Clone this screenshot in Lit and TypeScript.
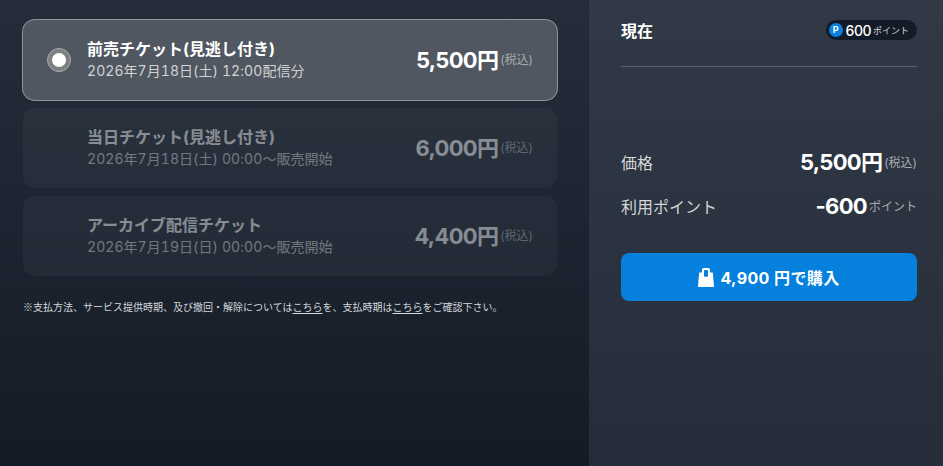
import { LitElement, html, css } from "lit";
import { customElement } from "lit/decorators.js";

const tickets = [
  { name: "前売チケット(見逃し付き)", date: "2026年7月18日(土) 12:00配信分", price: "5,500", active: true },
  { name: "当日チケット(見逃し付き)", date: "2026年7月18日(土) 00:00〜販売開始", price: "6,000", active: false },
  { name: "アーカイブ配信チケット", date: "2026年7月19日(日) 00:00〜販売開始", price: "4,400", active: false },
];

const splitDate = (s: string) =>
  s.split(/([\x20-\x7e]+)/).map((part, i) => (i % 2 ? html`<span class="latin">${part}</span>` : part));

@customElement("app-root")
export class AppRoot extends LitElement {
  static styles = css`
    :host {
      display: block;
      width: 943px;
      height: 466px;
      overflow: hidden;
      font-family: "Inter", "Noto Sans CJK JP", sans-serif;
      color: #fff;
    }
    .page { display: flex; height: 466px; }
    .left {
      width: 589px;
      box-sizing: border-box;
      padding: 20px 32px 0 23px;
      background: linear-gradient(180deg, #242d39 0%, #131b27 100%);
    }
    .list { display: flex; flex-direction: column; gap: 8px; }
    .card {
      height: 80px;
      box-sizing: border-box;
      border-radius: 12px;
      display: flex;
      align-items: center;
      padding: 0 24px 0 24px;
      background: rgba(255, 255, 255, 0.04);
    }
    .card.active {
      background: #505760;
      box-shadow: 0 0 0 1px #8e9399;
    }
    .card.off .text, .card.off .price { opacity: 0.45; }
    .radio {
      width: 24px;
      height: 24px;
      flex: none;
      box-sizing: border-box;
      border-radius: 50%;
      background: #7f7f7f;
      border: 1px solid #a9adb2;
      display: flex;
      align-items: center;
      justify-content: center;
    }
    .radio i { width: 14px; height: 14px; border-radius: 50%; background: #fff; display: block; }
    .radio-space { width: 24px; flex: none; }
    .text { margin-left: 16px; flex: 1; }
    .name { font-size: 16px; font-weight: 700; line-height: 20px; }
    .date { font-size: 14px; line-height: 20px; color: #d0d2d5; margin-top: 2px; }
    .latin { letter-spacing: 0.07px; font-variant-numeric: tabular-nums; }
    .price { display: flex; align-items: baseline; }
    .amount { font-size: 22px; font-weight: 700; line-height: 28px; letter-spacing: -0.7px; }
    .tax { font-size: 12px; color: #a6a9ae; margin-left: 2px; position: relative; top: -4px; }
    .note { font-size: 10px; line-height: 14px; color: #d6d8da; margin: 24px 0 0 0; white-space: nowrap; }
    .note u { text-underline-offset: 2px; }
    .mark { font-family: "Noto Sans CJK JP", sans-serif; }
    .right {
      width: 354px;
      box-sizing: border-box;
      padding: 0 26px 0 32px;
      background: linear-gradient(180deg, #303945 0%, #252d3a 100%);
    }
    .head {
      height: 67px;
      box-sizing: border-box;
      padding-top: 19px;
      border-bottom: 1px solid #5a616b;
      display: flex;
      justify-content: space-between;
      align-items: flex-start;
    }
    .head-title { font-size: 16px; font-weight: 700; line-height: 24px; }
    .pts {
      height: 20px;
      margin-top: 1px;
      box-sizing: border-box;
      padding: 0 8px 0 3px;
      border-radius: 10px;
      background: #131b27;
      display: flex;
      align-items: center;
    }
    .p {
      width: 14px; height: 14px; border-radius: 50%;
      background: #0a7fe0;
      font-size: 9px; font-weight: 700; line-height: 14px; text-align: center;
    }
    .pts b { font-size: 14px; font-weight: 500; margin-left: 3px; letter-spacing: -0.5px; }
    .pts span { font-size: 9px; color: #d6d8da; margin-left: 2px; }
    .rows { margin-top: 81px; display: flex; flex-direction: column; gap: 16px; }
    .row { display: flex; justify-content: space-between; align-items: center; height: 28px; }
    .label { font-size: 16px; color: #d4d6d9; }
    .val { display: flex; align-items: baseline; }
    .row .tax { top: -3px; }
    .btn {
      margin-top: 33px;
      height: 48px;
      border-radius: 8px;
      background: #0680dd;
      display: flex;
      align-items: center;
      justify-content: center;
      gap: 6px;
      font-size: 16px;
      font-weight: 700;
    }
    .btn span { letter-spacing: 0.4px; }
    .btn svg { display: block; }
  `;

  render() {
    return html`<div class="page">
      <div class="left">
        <div class="list">
          ${tickets.map(
            (t) => html`<div class="card ${t.active ? "active" : "off"}">
              ${t.active ? html`<div class="radio"><i></i></div>` : html`<div class="radio-space"></div>`}
              <div class="text">
                <div class="name">${t.name}</div>
                <div class="date">${splitDate(t.date)}</div>
              </div>
              <div class="price"><span class="amount">${t.price}円</span><span class="tax">(税込)</span></div>
            </div>`
          )}
        </div>
        <p class="note"><span class="mark">※</span>支払方法、サービス提供時期、及び撤回・解除については<u>こちら</u>を、支払時期は<u>こちら</u>をご確認下さい。</p>
      </div>
      <div class="right">
        <div class="head">
          <div class="head-title">現在</div>
          <div class="pts"><div class="p">P</div><b>600</b><span>ポイント</span></div>
        </div>
        <div class="rows">
          <div class="row">
            <div class="label">価格</div>
            <div class="val"><span class="amount">5,500円</span><span class="tax">(税込)</span></div>
          </div>
          <div class="row">
            <div class="label">利用ポイント</div>
            <div class="val"><span class="amount">-600</span><span class="tax">ポイント</span></div>
          </div>
        </div>
        <div class="btn">
          <svg width="16" height="19" viewBox="0 0 16 19" fill="none">
            <path d="M1.2 4.5H14.8L16 18.2a.7.7 0 0 1-.7.8H.7a.7.7 0 0 1-.7-.8Z" fill="#fff"/>
            <rect x="4" y="0" width="8" height="10.5" rx="1.8" fill="#fff"/>
            <rect x="6" y="2" width="4" height="6.8" rx="1" fill="#0680dd"/>
          </svg>
          <span>4,900 円で購入</span>
        </div>
      </div>
    </div>`;
  }
}
